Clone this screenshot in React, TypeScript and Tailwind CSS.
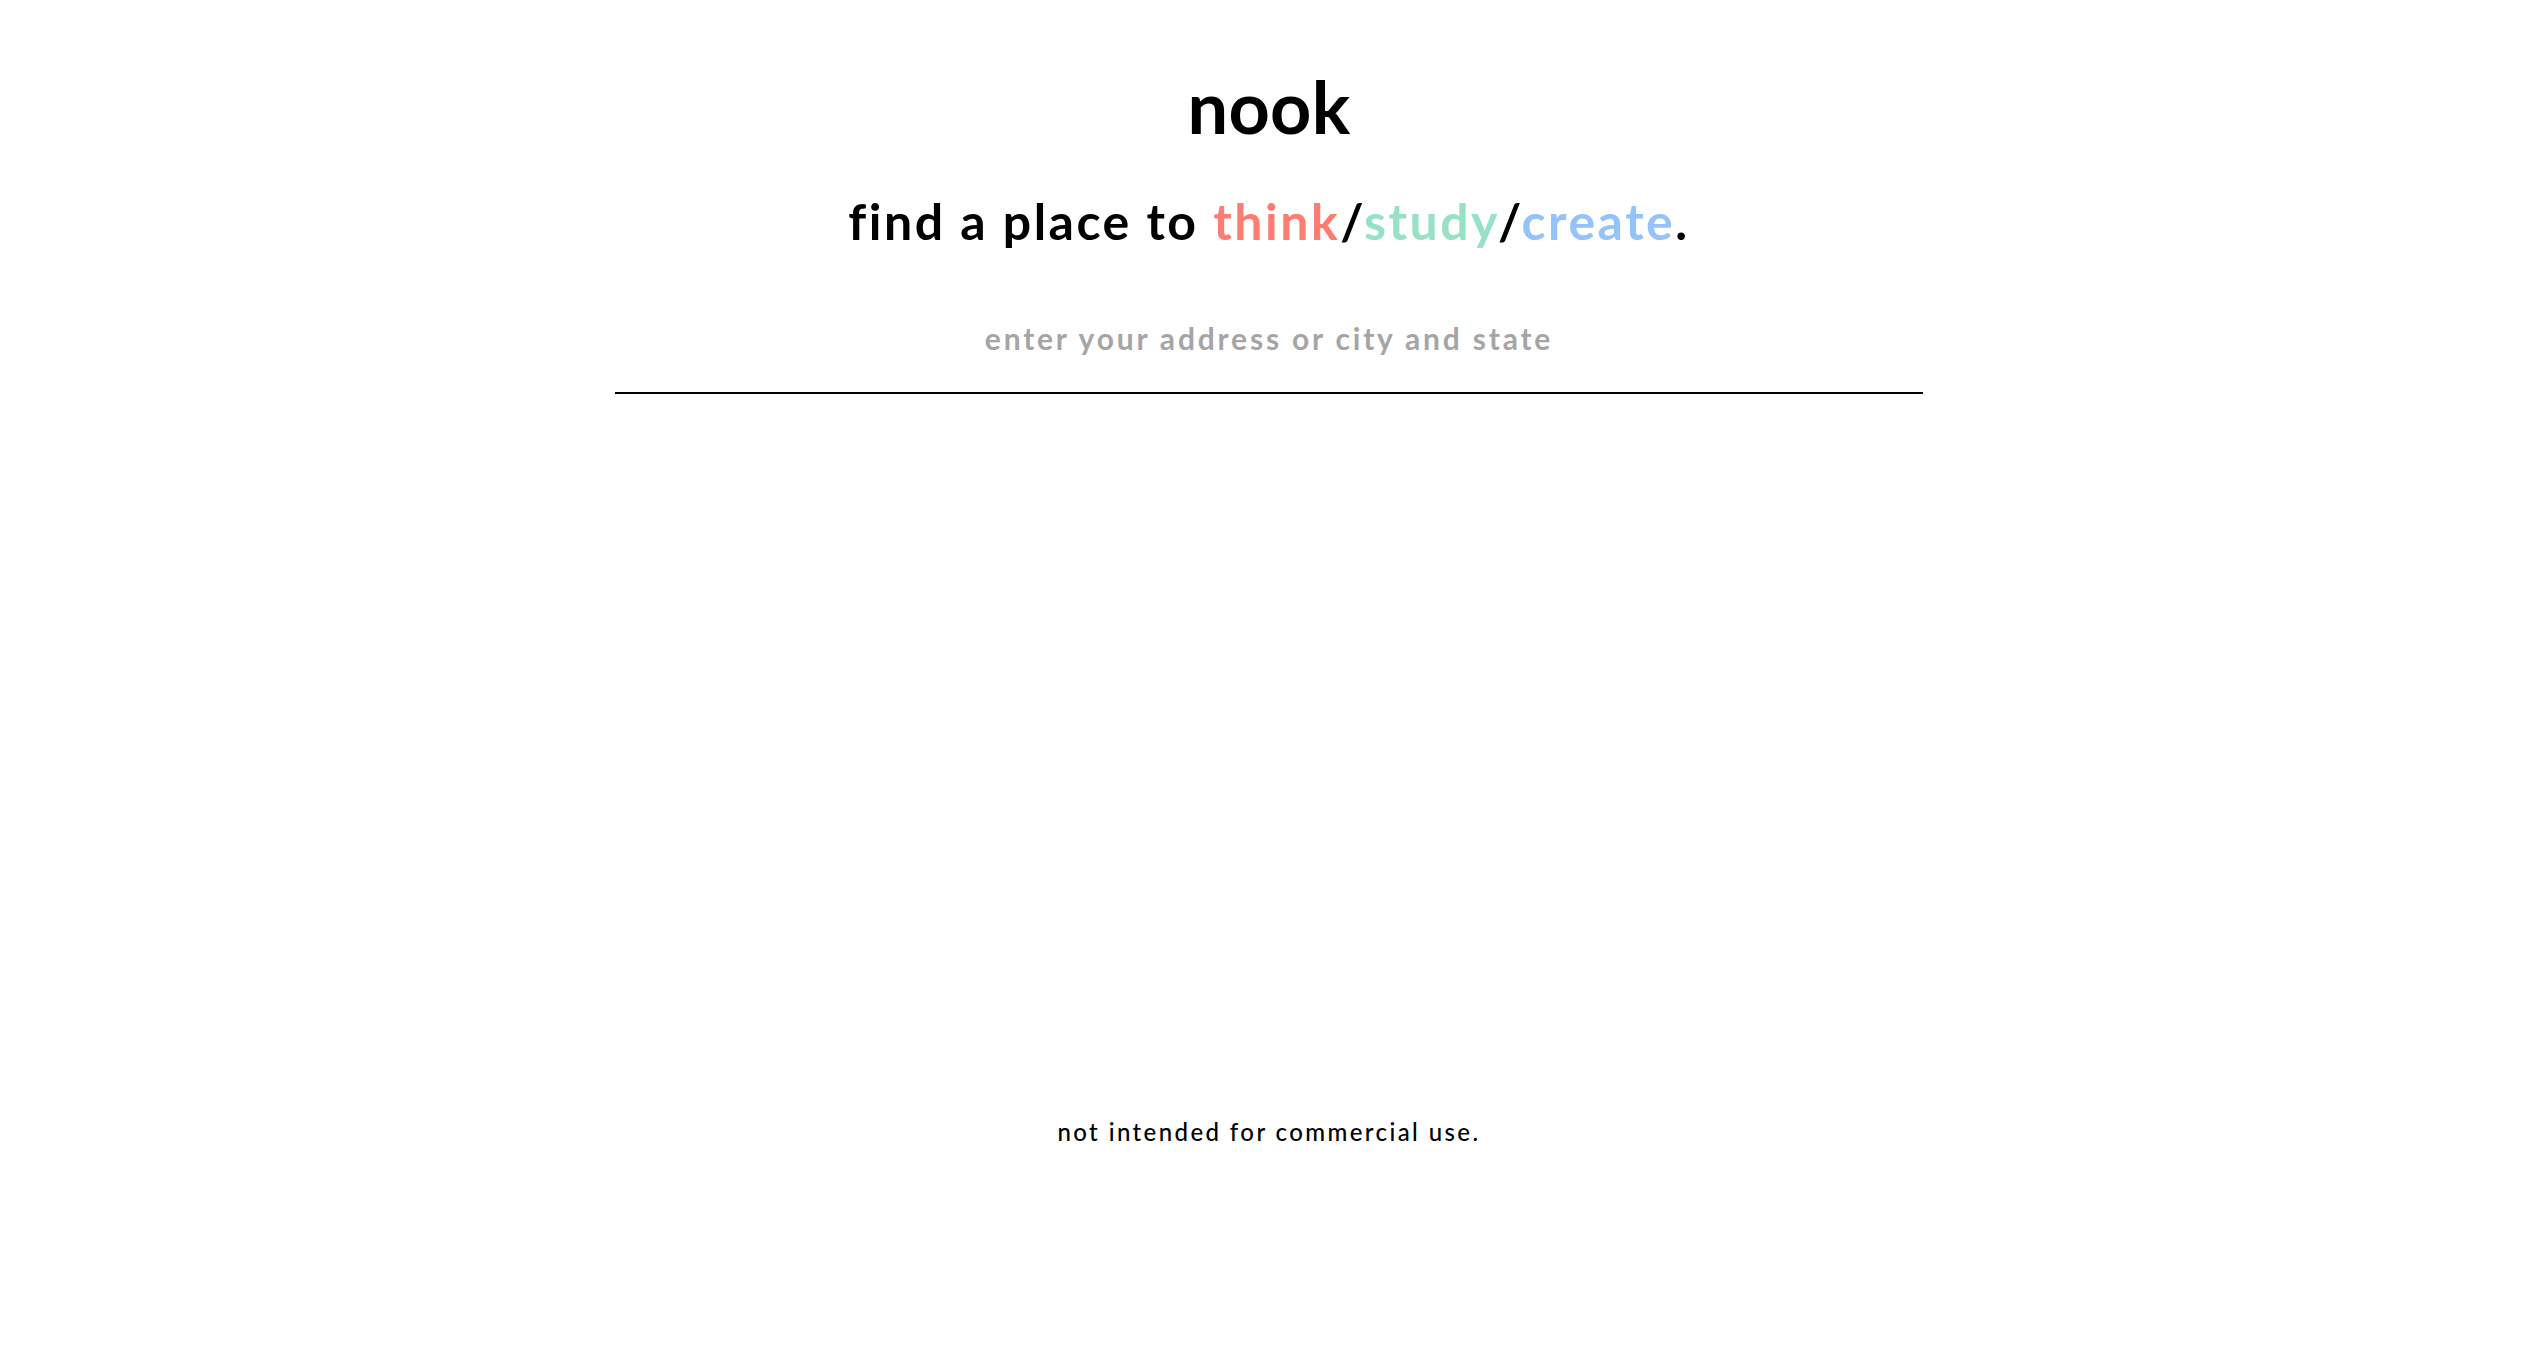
import React, { useState } from 'react';

const App = () => {
  const [address, setAddress] = useState('');

  return (
    <div className="min-h-screen w-full bg-white font-['Lato',sans-serif] text-black">
      <div className="flex flex-col items-center pt-[70px]">
        {/* Brand */}
        <h1 className="text-[72px] font-bold leading-none tracking-[0.3px]">nook</h1>

        {/* Tagline */}
        <h2 className="mt-[54px] text-[50px] font-bold leading-none tracking-[2.5px]">
          find a place to <span className="text-[#fe7c71]">think</span>/
          <span className="text-[#97e1c5]">study</span>/
          <span className="text-[#95c3f9]">create</span>.
        </h2>

        {/* Search */}
        <input
          type="text"
          value={address}
          onChange={(e) => setAddress(e.target.value)}
          placeholder="enter your address or city and state"
          className="mt-[54px] h-[94px] w-[1308px] border-b-2 border-black bg-transparent pb-4 text-center text-[30px] font-bold tracking-[2.8px] text-black outline-none placeholder:text-[#a5a5a5]"
        />

        {/* Footer */}
        <p className="mt-[726px] text-[24px] font-medium leading-none tracking-[2.4px]">not intended for commercial use.</p>
      </div>
    </div>
  );
};

export default App;
